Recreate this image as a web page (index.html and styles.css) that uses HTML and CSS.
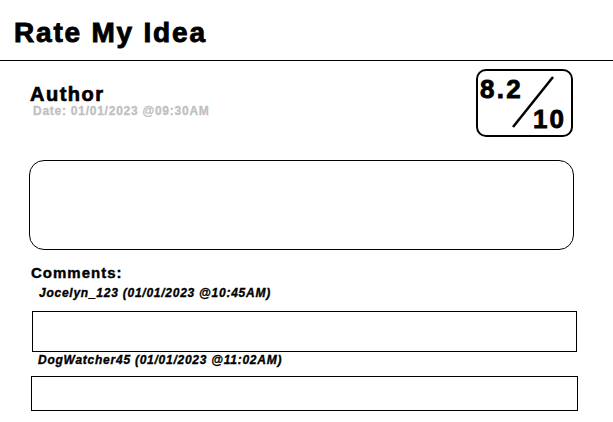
FILE: index.html
```html
<!DOCTYPE html>
<html>
<head>
<meta charset="utf-8">
<link rel="stylesheet" href="styles.css">
</head>
<body>
<header class="top">
  <h1 class="title">Rate My Idea</h1>
</header>
<main class="idea">
  <div class="idea-head">
    <div class="meta">
      <div class="author">Author</div>
      <div class="date">Date: 01/01/2023 @09:30AM</div>
    </div>
    <div class="score">
      <span class="score-val">8.2</span>
      <svg class="slash" width="44" height="54" viewBox="0 0 44 54"><line x1="2" y1="52" x2="42" y2="2" stroke="#000" stroke-width="2.5"/></svg>
      <span class="score-max">10</span>
    </div>
  </div>
  <div class="idea-body"></div>
  <section class="comments">
    <div class="comments-title">Comments:</div>
    <div class="comment-meta c1">Jocelyn_123 (01/01/2023 @10:45AM)</div>
    <div class="comment-box b1"></div>
    <div class="comment-meta c2">DogWatcher45 (01/01/2023 @11:02AM)</div>
    <div class="comment-box b2"></div>
  </section>
</main>
</body>
</html>
```
FILE: styles.css
```css
html, body { margin: 0; padding: 0; background: #fff; }
body { font-family: "Liberation Sans", Arial, sans-serif; color: #000; }
.top { border-bottom: 1px solid #000; padding: 18px 0 12px 14px; }
.title { margin: 0; font-size: 28px; line-height: 30px; font-weight: 900; letter-spacing: 1.8px; -webkit-text-stroke: 0.9px #000; }
.idea { padding: 0 36px 0 29px; }
.idea-head { display: flex; justify-content: space-between; align-items: flex-start; padding-top: 8px; }
.meta { padding-top: 16px; padding-left: 1px; }
.author { font-weight: bold; font-size: 20px; line-height: 18px; letter-spacing: 1.5px; -webkit-text-stroke: 0.7px #000; }
.date { font-weight: bold; font-size: 12px; line-height: 14px; color: #c0c0c0; padding: 1px 0 0 3px; letter-spacing: 0.75px; -webkit-text-stroke: 0.3px #c0c0c0; }
.score { position: relative; width: 93px; height: 64px; border: 2px solid #000; border-radius: 10px; margin-right: 4px; }
.score-val { position: absolute; left: 2px; top: 4px; font-weight: bold; font-size: 26px; line-height: 28px; letter-spacing: 2.3px; -webkit-text-stroke: 0.8px #000; }
.score-max { position: absolute; right: 5px; top: 34px; font-weight: bold; font-size: 26px; line-height: 28px; letter-spacing: 2px; -webkit-text-stroke: 0.8px #000; }
.slash { position: absolute; left: 33px; top: 4px; }
.idea-body { height: 88px; border: 1px solid #000; border-radius: 15px; margin-top: 23px; margin-right: 3px; }
.comments { padding-top: 15px; }
.comments-title { font-weight: bold; font-size: 15px; line-height: 16px; padding-left: 2px; letter-spacing: 1px; -webkit-text-stroke: 0.4px #000; }
.comment-meta { font-weight: bold; font-style: italic; font-size: 12px; line-height: 14px; letter-spacing: 0.75px; -webkit-text-stroke: 0.35px #000; }
.c1 { padding: 5px 0 0 10px; }
.c2 { padding: 1px 0 0 9px; }
.comment-box { border: 1px solid #000; }
.b1 { height: 39px; margin: 11px 0 0 3px; }
.b2 { height: 33px; margin: 9px -1px 0 2px; }
```
